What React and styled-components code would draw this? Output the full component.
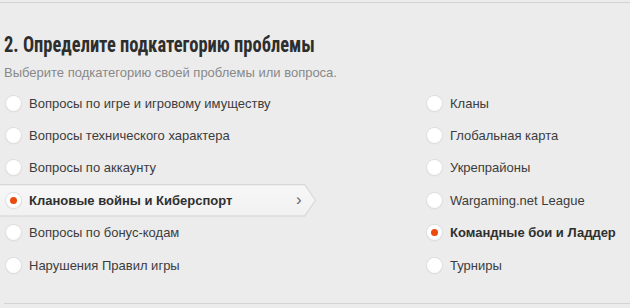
import React from 'react';
import styled, { createGlobalStyle } from 'styled-components';

const GlobalStyle = createGlobalStyle`
  body {
    margin: 0;
    background: #ececec;
    font-family: "Liberation Sans", Arial, sans-serif;
  }
`;

const leftItems = [
  { label: 'Вопросы по игре и игровому имуществу' },
  { label: 'Вопросы технического характера' },
  { label: 'Вопросы по аккаунту' },
  { label: 'Клановые войны и Киберспорт', checked: true, active: true },
  { label: 'Вопросы по бонус-кодам' },
  { label: 'Нарушения Правил игры' },
];

const rightItems = [
  { label: 'Кланы' },
  { label: 'Глобальная карта' },
  { label: 'Укрепрайоны' },
  { label: 'Wargaming.net League' },
  { label: 'Командные бои и Ладдер', checked: true },
  { label: 'Турниры' },
];

export default function App() {
  return (
    <>
      <GlobalStyle />
      <Section>
        <Title>2. Определите подкатегорию проблемы</Title>
        <Hint>Выберите подкатегорию своей проблемы или вопроса.</Hint>
        <Columns>
          <List>
            {leftItems.map((item) => (
              <Option key={item.label} $active={item.active}>
                <Radio $checked={item.checked} />
                <Label $checked={item.checked}>{item.label}</Label>
                {item.active && <Chevron>›</Chevron>}
              </Option>
            ))}
          </List>
          <List>
            {rightItems.map((item) => (
              <Option key={item.label}>
                <Radio $checked={item.checked} />
                <Label $checked={item.checked}>{item.label}</Label>
              </Option>
            ))}
          </List>
        </Columns>
      </Section>
    </>
  );
}

const Section = styled.div`
  margin-top: 2px;
  border-top: 1px solid #d4d4d4;
  padding: 29px 0 23px;
  height: 302px;
  box-sizing: border-box;
  position: relative;
  &::after {
    content: '';
    position: absolute;
    left: 4px;
    right: 0;
    bottom: 0;
    border-bottom: 1px solid #d4d4d4;
  }
`;

const Title = styled.h2`
  display: block;
  width: max-content;
  margin: 0 0 6px 4px;
  font-family: "Roboto Condensed", "DejaVu Sans Condensed", sans-serif;
  font-weight: bold;
  font-size: 22px;
  line-height: 26px;
  color: #2e2e2e;
  transform: scaleX(0.84);
  transform-origin: left center;
`;

const Hint = styled.p`
  margin: 0 0 5px 4px;
  font-size: 13px;
  line-height: 18px;
  color: #888;
`;

const Columns = styled.div`
  display: grid;
  grid-template-columns: 421px 1fr;
`;

const List = styled.div`
  display: flex;
  flex-direction: column;
`;

const Option = styled.div`
  position: relative;
  display: flex;
  align-items: center;
  height: 32.4px;
  padding-left: 6px;
  width: ${(p) => (p.$active ? '316px' : 'auto')};
  box-sizing: border-box;
  ${(p) =>
    p.$active &&
    `
    background: #d2d2d2;
    clip-path: polygon(0 0, calc(100% - 11px) 0, 100% 50%, calc(100% - 11px) 100%, 0 100%);
    &::before {
      content: '';
      position: absolute;
      inset: 1px 1px 1px 0;
      background: linear-gradient(#f7f7f7, #f1f1f1);
      clip-path: polygon(0 0, calc(100% - 10.5px) 0, 100% 50%, calc(100% - 10.5px) 100%, 0 100%);
    }
  `}
`;

const Radio = styled.span`
  position: relative;
  flex: none;
  width: 15px;
  height: 15px;
  border-radius: 50%;
  background: radial-gradient(circle at 50% 40%, #fff 55%, #f6f6f6 100%);
  box-shadow: 0 0 0 1px #dedede, 0 1px 2px rgba(0, 0, 0, 0.07);
  margin-right: 8px;
  &::after {
    content: '';
    display: ${(p) => (p.$checked ? 'block' : 'none')};
    position: absolute;
    left: 4px;
    top: 4px;
    width: 7px;
    height: 7px;
    border-radius: 50%;
    background: #ea4a0c;
  }
`;

const Label = styled.span`
  position: relative;
  font-size: 13px;
  color: ${(p) => (p.$checked ? '#2f2f2f' : '#3c3c3c')};
  font-weight: ${(p) => (p.$checked ? 'bold' : 'normal')};
`;

const Chevron = styled.span`
  position: absolute;
  left: 296px;
  top: 6px;
  font-size: 17px;
  color: #666;
`;
